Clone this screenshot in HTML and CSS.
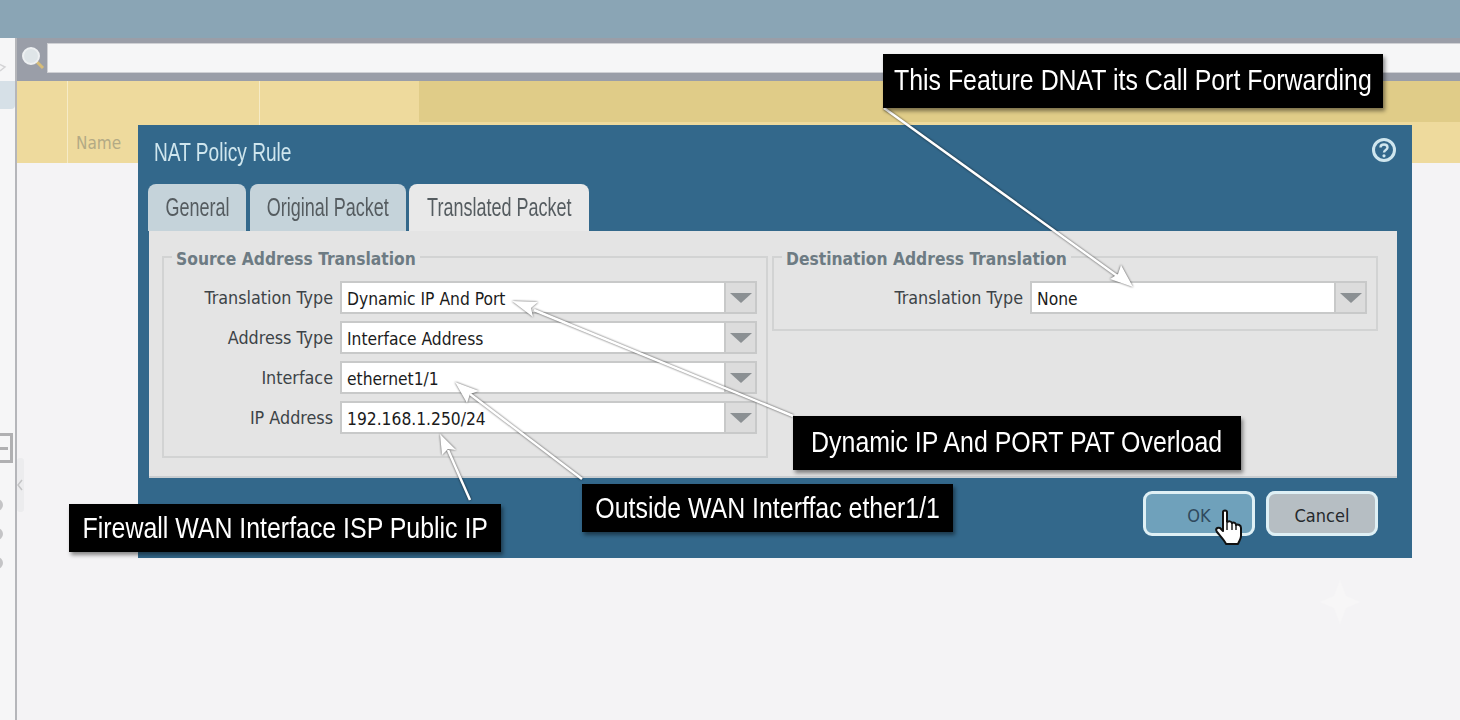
FILE: index.html
```html
<!DOCTYPE html>
<html>

<head>
    <title>NAT Policy Rule</title>
    <meta charset="utf-8">
    <link rel="stylesheet" href="styles.css">
</head>

<body>
    <div class="top-bar"></div>
    <div class="main">
        <div class="side">
            <div class="side-gap">
                <svg width="15" height="43" viewBox="0 0 15 43">
                    <path d="M-3 25 L5 29 L0 33" fill="none" stroke="#d4d4d6" stroke-width="1.5" />
                </svg>
            </div>
            <div class="side-active"></div>
            <div class="side-box"></div>
            <div class="side-dots">
                <span></span>
                <span></span>
                <span></span>
            </div>
        </div>
        <div class="content">
            <div class="search-row">
                <svg class="search-icon" width="26" height="26" viewBox="0 0 26 26">
                    <line x1="15" y1="15" x2="22" y2="22" stroke="#d8bd78" stroke-width="3" />
                    <circle cx="10" cy="10" r="8" fill="#dfe5e8" stroke="#eef0f2" stroke-width="2" />
                </svg>
                <div class="search-input"></div>
            </div>
            <div class="table-head">
                <div class="head-col col-check"></div>
                <div class="head-col col-name">Name</div>
                <div class="head-col col-tags"></div>
                <div class="head-rest">
                    <div class="head-group"></div>
                </div>
            </div>
        </div>
    </div>

    <svg class="handle" width="7" height="54" viewBox="0 0 7 54">
        <rect width="7" height="54" rx="3" fill="#ececee" />
        <path d="M5 22 L1 27 L5 32" fill="none" stroke="#c4c4c6" stroke-width="1.5" />
    </svg>
    <svg class="sparkle" width="44" height="48" viewBox="0 0 44 48">
        <path d="M22 2 L28 18 L42 24 L28 30 L22 46 L16 30 L2 24 L16 18 Z" fill="#f7f6f7" />
    </svg>

    <div class="dialog">
        <div class="dialog-title">
            <span>NAT Policy Rule</span>
            <svg width="26" height="26" viewBox="0 0 26 26">
                <circle cx="13" cy="13" r="10.5" fill="none" stroke="#cfe6ee" stroke-width="3" />
                <path d="M9.5 10.5 C9.5 6.5 16.5 6.5 16.5 10.5 C16.5 13 13 13 13 15.5" fill="none" stroke="#cfe6ee" stroke-width="2.4" />
                <circle cx="13" cy="18.8" r="1.6" fill="#cfe6ee" />
            </svg>
        </div>
        <div class="tabs">
            <div class="tab tab-general"><span>General</span></div>
            <div class="tab tab-original"><span>Original Packet</span></div>
            <div class="tab tab-active"><span>Translated Packet</span></div>
        </div>
        <div class="panel">
            <fieldset class="group group-source">
                <legend>Source Address Translation</legend>
                <div class="row">
                    <label>Translation Type</label>
                    <div class="select"><span>Dynamic IP And Port</span><i></i></div>
                </div>
                <div class="row">
                    <label>Address Type</label>
                    <div class="select"><span>Interface Address</span><i></i></div>
                </div>
                <div class="row">
                    <label>Interface</label>
                    <div class="select"><span>ethernet1/1</span><i></i></div>
                </div>
                <div class="row">
                    <label>IP Address</label>
                    <div class="select"><span>192.168.1.250/24</span><i></i></div>
                </div>
            </fieldset>
            <fieldset class="group group-dest">
                <legend>Destination Address Translation</legend>
                <div class="row">
                    <label>Translation Type</label>
                    <div class="select"><span>None</span><i></i></div>
                </div>
            </fieldset>
        </div>
        <div class="dialog-footer">
            <button class="btn btn-ok">OK</button>
            <button class="btn btn-cancel">Cancel</button>
        </div>
    </div>

    <svg class="arrows" width="1460" height="720" viewBox="0 0 1460 720">
        <g class="arrow">
            <line x1="884" y1="108" x2="1120" y2="278" />
            <path d="M1133 287 L1110 279 L1118 274 L1121 265 Z" />
        </g>
        <g class="arrow">
            <line x1="793" y1="416" x2="534" y2="310" />
            <path d="M512 301 L538 302 L531 308 L533 317 Z" />
        </g>
        <g class="arrow">
            <line x1="582" y1="479" x2="470" y2="394" />
            <path d="M455 382 L479 391 L470 394 L467 403 Z" />
        </g>
        <g class="arrow">
            <line x1="470" y1="500" x2="448" y2="450" />
            <path d="M440 434 L456 450 L448 449 L442 455 Z" />
        </g>
    </svg>

    <div class="callout callout-dnat"><span>This Feature DNAT its Call Port Forwarding</span></div>
    <div class="callout callout-pat"><span>Dynamic IP And PORT PAT Overload</span></div>
    <div class="callout callout-wan"><span>Outside WAN Interffac ether1/1</span></div>
    <div class="callout callout-ip"><span>Firewall WAN Interface ISP Public IP</span></div>

    <svg class="hand" width="30" height="38" viewBox="0 0 30 38">
        <path d="M9 3 C9 1 13 1 13 3 L13 13 C15 12 17 12 18 14 C20 13 22 14 22 16 C24 15 27 16 27 19 L27 27 C27 30 25 32 24 35 L12 35 C11 32 8 29 3 23 C1 20 3 18 6 19 L9 22 Z" fill="#fff" stroke="#111" stroke-width="2" stroke-linejoin="round" />
        <path d="M13 14 L13 21 M18 14 L18 21 M22 16 L22 21" stroke="#111" stroke-width="1.4" fill="none" />
    </svg>
</body>

</html>
```

FILE: styles.css
```css
* {
    box-sizing: border-box;
}

body {
    margin: 0;
    width: 1460px;
    height: 720px;
    overflow: hidden;
    position: relative;
    background-color: #f4f3f5;
    font-family: "DejaVu Sans Condensed", "DejaVu Sans", sans-serif;
}

.top-bar {
    height: 38px;
    background-color: #8aa5b5;
}

.main {
    display: flex;
    height: 682px;
}

.side {
    width: 17px;
    flex-shrink: 0;
    border-right: 2px solid #b5b6ba;
    background-color: #f6f6f7;
}

.side-gap {
    height: 43px;
}

.side-gap svg {
    display: block;
}

.side-active {
    width: 15px;
    height: 28px;
    background-color: #d6e0e7;
    border-radius: 0 0 4px 0;
}

.side-box {
    display: flex;
    align-items: center;
    width: 13px;
    height: 30px;
    margin-top: 324px;
    border: 3px solid #b0b0b2;
    border-left: 0;
}

.side-box::after {
    content: "";
    width: 8px;
    height: 3px;
    background-color: #b0b0b2;
}

.side-dots {
    display: flex;
    flex-direction: column;
    gap: 17px;
    margin-top: 36px;
}

.side-dots span {
    display: block;
    width: 12px;
    height: 12px;
    margin-left: -9px;
    border-radius: 50%;
    background-color: #c4c4c6;
}

.content {
    flex: 1;
}

.search-row {
    display: flex;
    height: 43px;
    padding: 5px 0 8px 4px;
    background-color: #9a9ea8;
}

.search-icon {
    flex-shrink: 0;
    margin-top: 3px;
}

.search-input {
    flex: 1;
    background-color: #f6f6f7;
    border: 1px solid #cfd0d4;
    border-right: 0;
}

.table-head {
    display: flex;
    height: 82px;
    background-color: #eeda9d;
}

.head-col {
    border-right: 1px solid #f6ebc6;
}

.col-check {
    width: 51px;
}

.col-name {
    width: 192px;
    padding: 52px 0 0 8px;
    font-size: 17px;
    color: #b3aa85;
}

.col-tags {
    width: 159px;
    border-right: 0;
}

.head-rest {
    flex: 1;
}

.head-group {
    height: 41px;
    background-color: #e0cc88;
}

.handle {
    position: absolute;
    left: 17px;
    top: 458px;
}

.sparkle {
    position: absolute;
    left: 1318px;
    top: 578px;
}

.dialog {
    position: absolute;
    left: 138px;
    top: 125px;
    width: 1274px;
    height: 433px;
    padding: 0 14px 0 11px;
    background-color: #33688b;
    display: flex;
    flex-direction: column;
}

.dialog-title {
    display: flex;
    justify-content: space-between;
    align-items: center;
    height: 59px;
    padding: 0 1px 5px 5px;
    font-family: "Liberation Sans", sans-serif;
    font-size: 25px;
    color: #cfe6ee;
}

/* no narrow font installed, so the text is squeezed */
.dialog-title span {
    display: inline-block;
    transform: scaleX(0.765);
    transform-origin: left center;
}

.dialog-title svg {
    margin-top: -4px;
}

.tabs {
    display: flex;
    height: 47px;
    gap: 4px;
    margin-left: -1px;
}

.tab {
    display: flex;
    justify-content: center;
    padding-top: 9px;
    white-space: nowrap;
    font-family: "Liberation Sans", sans-serif;
    font-size: 25px;
    color: #555c60;
    background-color: #c5d3da;
    border-radius: 8px 8px 0 0;
}

.tab span {
    display: inline-block;
    transform: scaleX(0.72);
}

.tab-general {
    width: 98px;
}

.tab-original {
    width: 156px;
}

.tab-active {
    width: 180px;
    margin-left: -1px;
    background-color: #e9e9e9;
}

.panel {
    display: flex;
    align-items: flex-start;
    gap: 4px;
    width: 1248px;
    height: 247px;
    padding: 13px 19px 0 13px;
    background-color: #e4e4e4;
    border-bottom: 2px solid #c9cdd0;
}

.group {
    width: 606px;
    margin: 0;
    padding: 12px 9px 0 0;
    border: 2px solid #d2d3d3;
}

.group-source {
    height: 214px;
}

.group-dest {
    height: 87px;
}

.group legend {
    margin-left: 8px;
    padding: 5px 4px 0 4px;
    font-size: 17.3px;
    font-weight: bold;
    color: #6d7b83;
}

.row {
    display: flex;
    align-items: center;
    height: 33px;
    margin-bottom: 7px;
}

.row label {
    width: 169px;
    padding-bottom: 1px;
    text-align: right;
    font-size: 17.8px;
    color: #3c4347;
}

.select {
    display: flex;
    align-items: stretch;
    width: 417px;
    height: 33px;
    margin-left: 7px;
    border: 2px solid #c8c9c9;
    background-color: #fff;
}

.select span {
    flex: 1;
    padding: 6px 0 0 5px;
    font-size: 17.3px;
    color: #1b1b1b;
}

.select i {
    display: flex;
    align-items: center;
    justify-content: center;
    width: 31px;
    background-color: #dcdcdc;
    border-left: 2px solid #c8c9c9;
}

.select i::after {
    content: "";
    border-left: 11px solid transparent;
    border-right: 11px solid transparent;
    border-top: 10px solid #8b9093;
}

.group-dest .row label {
    width: 249px;
}

.group-dest .select {
    width: 337px;
}

.dialog-footer {
    display: flex;
    justify-content: flex-end;
    gap: 11px;
    padding: 13px 20px 0 0;
}

.btn {
    width: 112px;
    height: 45px;
    padding-top: 4px;
    border: 3px solid #dff0f5;
    border-radius: 9px;
    font-family: "DejaVu Sans Condensed", "DejaVu Sans", sans-serif;
    font-size: 18px;
}

.btn-ok {
    background-color: #6fa1bb;
    color: #2f4a5e;
}

.btn-cancel {
    background-color: #b6bec3;
    color: #25292c;
}

.arrows {
    position: absolute;
    left: 0;
    top: 0;
}

.arrow {
    filter: drop-shadow(0 0 1px rgba(0, 0, 0, 0.7));
}

.arrow line {
    stroke: #fff;
    stroke-width: 2.5;
}

.arrow path {
    fill: #fff;
}

.callout {
    position: absolute;
    display: flex;
    align-items: center;
    justify-content: center;
    white-space: nowrap;
    background-color: #000;
    color: #fff;
    font-family: "Liberation Sans", sans-serif;
    font-size: 30px;
    box-shadow: 2px 3px 4px rgba(0, 0, 0, 0.45);
}

.callout span {
    display: inline-block;
    transform: scaleX(0.83);
}

.callout-dnat {
    left: 883px;
    top: 54px;
    width: 500px;
    height: 54px;
    padding-bottom: 3px;
}

.callout-pat {
    left: 793px;
    top: 416px;
    width: 448px;
    height: 54px;
    padding-bottom: 3px;
}

.callout-wan {
    left: 582px;
    top: 484px;
    width: 371px;
    height: 48px;
}

.callout-ip {
    left: 69px;
    top: 504px;
    width: 432px;
    height: 48px;
}

.hand {
    position: absolute;
    left: 1214px;
    top: 509px;
}
```
